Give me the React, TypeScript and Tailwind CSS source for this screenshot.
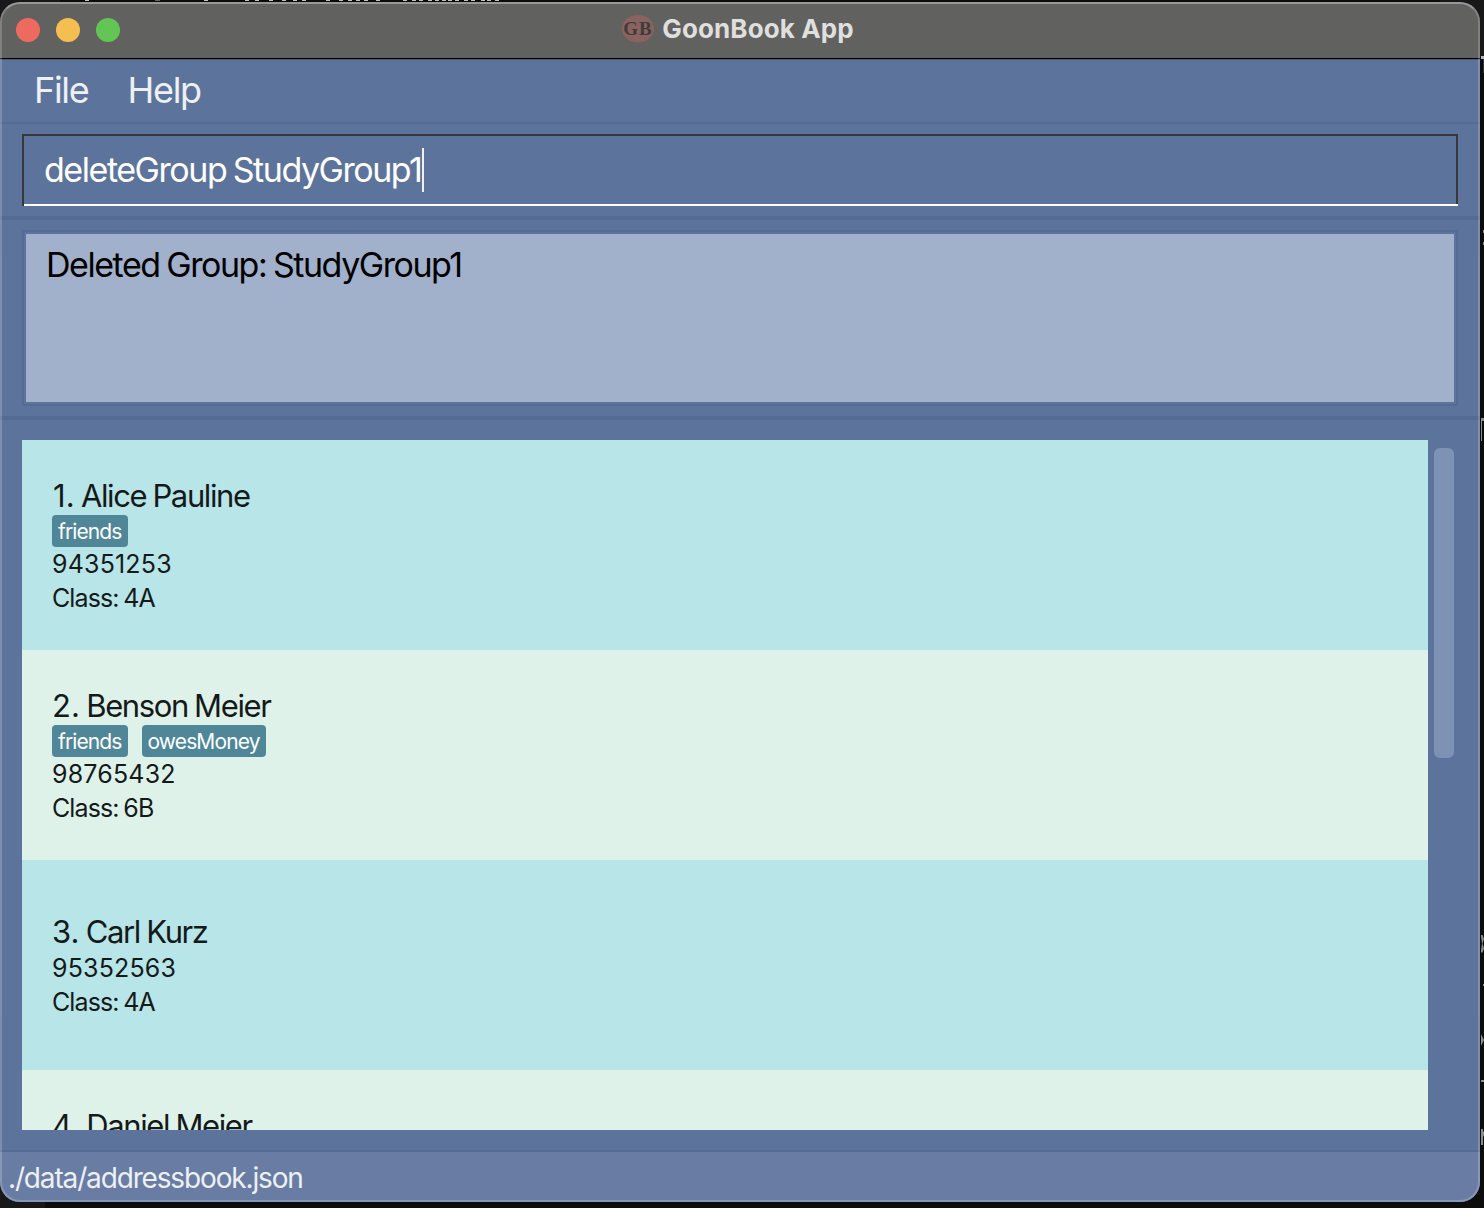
import React from "react";

type Person = { no: string; name: string; tags: string[]; phone?: string; klass?: string };

const people: Person[] = [
  { no: "1.", name: "Alice Pauline", tags: ["friends"], phone: "94351253", klass: "Class: 4A" },
  { no: "2.", name: "Benson Meier", tags: ["friends", "owesMoney"], phone: "98765432", klass: "Class: 6B" },
  { no: "3.", name: "Carl Kurz", tags: [], phone: "95352563", klass: "Class: 4A" },
  { no: "4.", name: "Daniel Meier", tags: [] },
];

const topMarks = [
  85, 204, 245, 255, 269, 282, 293, 302, 326, 339, 348, 356, 364, 376, 403, 412, 419, 428, 435, 442, 448, 455, 464,
  471, 481, 487, 495,
];

/* Slivers of the desktop that show around the window's edges. */
function DesktopEdges() {
  return (
    <svg className="absolute inset-0" width="1484" height="1208" viewBox="0 0 1484 1208" fill="#8c8c8c">
      <rect width="60" height="30" fill="#181818" />
      <rect x="1440" width="44" height="57" fill="#181818" />
      <rect y="1180" width="45" height="28" fill="#181818" />
      {topMarks.map((x) => (
        <rect key={x} x={x} width="4" height="1" fill="#c4c4c4" />
      ))}
      <rect x="155" width="5" height="1" fill="#666" />
      <rect x="1481" y="56" width="3" height="3" fill="#b5b5b5" />
      <rect x="1483" y="59" width="1" height="14" fill="#333" />
      <rect x="1483" y="230" width="1" height="3" />
      <rect x="1483" y="242" width="1" height="3" />
      <path d="M1481 418h3v3h-2v20h-1z" />
      <path d="M1481 935h1.500l1.500 4-1.500 4.500 1.500 5-1.500 4h-1.500v-2l1-7-1-7z" />
      <rect x="1483" y="984" width="1" height="2" />
      <path d="M1481 1034l3 6-3 6z" />
      <rect x="1481" y="1080" width="3" height="2" />
      <path d="M1481 1129h2v3l1-1v4l-1 2v8h-2z" />
    </svg>
  );
}

function TitleBar() {
  return (
    <div className="relative flex h-[56px] shrink-0 items-center justify-center bg-[#61615f]">
      <div className="absolute left-4 top-4 flex gap-4">
        <span className="size-6 rounded-full bg-[#ed6a5e]" />
        <span className="size-6 rounded-full bg-[#f4bf50]" />
        <span className="size-6 rounded-full bg-[#62c554]" />
      </div>
      <div className="flex items-center gap-2 pb-[3px] pr-1">
        <svg width="32" height="28" viewBox="0 0 32 28">
          <ellipse cx="16" cy="13.8" rx="16" ry="13.7" fill="#8a6360" />
          <text x="1.3 17" y="20" fontFamily="Liberation Serif" fontWeight="bold" fontSize="19" fill="#403b3a">GB</text>
        </svg>
        <span className="text-[26px] font-bold leading-8 tracking-[0.1px] text-[#dfdfde]">GoonBook App</span>
      </div>
    </div>
  );
}

function Card({ person, odd, cut }: { person: Person; odd: boolean; cut: boolean }) {
  return (
    <div
      className={`flex shrink-0 flex-col pl-[30px] text-[#141a1a] ${cut ? "h-[60px] overflow-hidden pt-[37px]" : "h-[210px] justify-center pt-[2px]"} ${odd ? "bg-[#dff2ea]" : "bg-[#b8e5e7]"}`}
    >
      <div className="flex h-[38px] shrink-0 whitespace-pre text-[31px] leading-[38px]">
        <span className={`tracking-[0.1px] [word-spacing:-2.6px] ${person.no === "1." ? "pl-px" : ""}`}>{person.no} </span>
        <span className="tracking-[-1.4px] [word-spacing:-1px]">{person.name}</span>
      </div>
      {person.tags.length > 0 && (
        <div className="flex h-8 gap-[14px]">
          {person.tags.map((t) => (
            <span key={t} className="h-8 rounded-[4px] bg-[#4f8799] px-[6px] text-[21px] leading-[33px] tracking-[-0.88px] text-white">{t}</span>
          ))}
        </div>
      )}
      {person.phone && <div className="text-[25px] leading-[34px] tracking-[0.18px]">{person.phone}</div>}
      {person.klass && <div className="text-[25px] leading-[34px] tracking-[-0.9px] [word-spacing:-1.4px]">{person.klass}</div>}
    </div>
  );
}

export default function App() {
  return (
    <div className="relative h-[1208px] w-[1484px] overflow-hidden bg-[#0c0c0c] pt-[2px] font-['Inter',sans-serif]">
      <DesktopEdges />
      <div className="relative flex h-[1200px] w-[1480px] flex-col overflow-hidden rounded-[20px] bg-[#5c749b]">
        <TitleBar />
        <div className="h-[2px] shrink-0 border-t border-black bg-[#4d5a70]" />
        <nav className="flex h-[64px] shrink-0 gap-[39px] border-b-2 border-[#546b94] pl-[34px] text-[36px] leading-[60px] tracking-[-1.3px] text-[#edf0f5]">
          <span>File</span>
          <span>Help</span>
        </nav>
        <div className="h-[96px] shrink-0 border-b-4 border-[#546b94] px-[22px] pt-[10px]">
          <div className="h-[72px] border-l-2 border-[#383838]">
            <div className="flex h-[70px] items-center border-r-2 border-t-2 border-[#383838] pl-5">
              <span className="text-[34px] leading-[44px] tracking-[-1.45px] text-white [word-spacing:-1.7px]">deleteGroup StudyGroup1</span>
              <span className="ml-px h-[44px] w-[2px] bg-white/90" />
            </div>
            <div className="h-[2px] bg-white" />
          </div>
        </div>
        <div className="h-[200px] shrink-0 border-b-4 border-[#546b94] px-[22px] pt-[10px]">
          <div className="h-[176px] border-2 border-[#546b94] p-[2px]">
            <div className="h-[168px] bg-[#a1b0cb] pl-5 pt-[9px] text-[34px] leading-[44px] tracking-[-1.45px] text-black [word-spacing:-1.5px]">
              Deleted Group: StudyGroup1
            </div>
          </div>
        </div>
        <div className="flex h-[730px] shrink-0 pl-[22px] pt-5">
          <div className="flex h-[690px] w-[1406px] flex-col overflow-hidden">
            {people.map((p, i) => (
              <Card key={p.name} person={p} odd={i % 2 === 1} cut={i === people.length - 1} />
            ))}
          </div>
          <div className="ml-[6px] mt-2 h-[310px] w-5 rounded-[6px] bg-[#7e92b3]" />
        </div>
        <footer className="h-[52px] shrink-0 border-t-2 border-[#546b94] bg-[#697da4] pl-2 text-[28px] leading-[52px] tracking-[-1.15px] text-[#edf0f5]">
          ./data/addressbook.json
        </footer>
        <div className="pointer-events-none absolute inset-0 rounded-[20px] border-2 border-white/20 border-t-white/35" />
      </div>
    </div>
  );
}
